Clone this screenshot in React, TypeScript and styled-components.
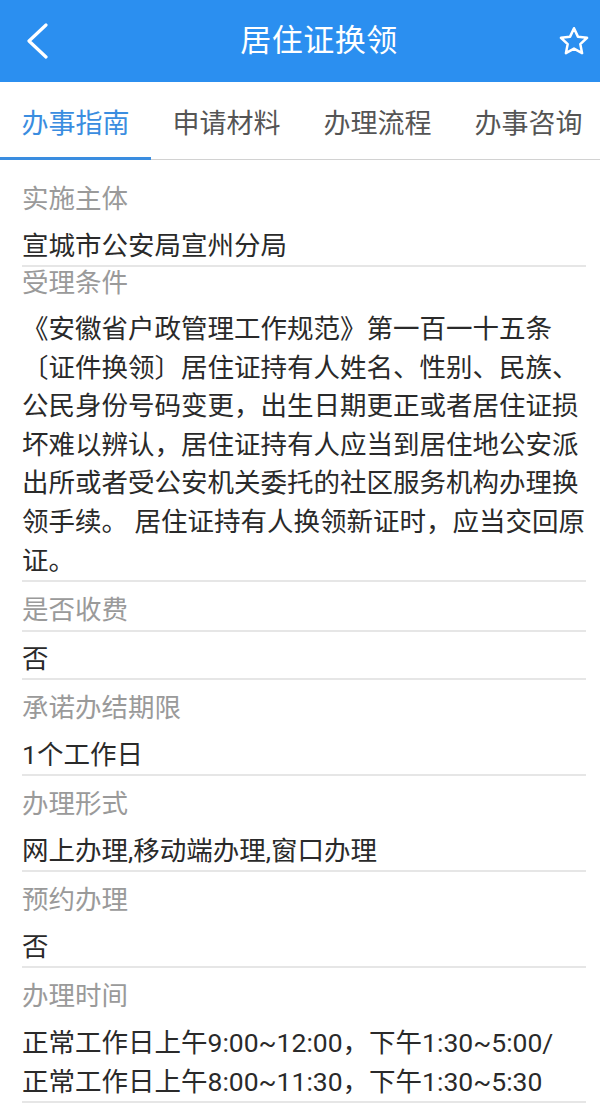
import React from "react";
import styled, { createGlobalStyle } from "styled-components";

const GlobalStyle = createGlobalStyle`
  html, body {
    margin: 0;
    padding: 0;
    background: #ffffff;
  }
  body {
    font-family: Roboto, "Noto Sans CJK SC", "Noto Sans", sans-serif;
  }
  * { box-sizing: border-box; }
`;

const Page = styled.div`
  width: 600px;
  min-height: 1107px;
  background: #ffffff;
  overflow: hidden;
`;

const Header = styled.header`
  height: 82px;
  background: #2b8ff0;
  display: flex;
  align-items: center;
`;

const BackButton = styled.div`
  width: 90px;
  height: 82px;
  padding-left: 26px;
  display: flex;
  align-items: center;
`;

const Title = styled.h1`
  flex: 1;
  margin: 0;
  text-align: center;
  color: #ffffff;
  font-size: 31px;
  font-weight: 400;
  line-height: 82px;
  letter-spacing: 0.5px;
`;

const StarButton = styled.div`
  width: 52px;
  height: 82px;
  display: flex;
  align-items: center;
  justify-content: center;
`;

const TabBar = styled.nav`
  height: 78px;
  display: flex;
  border-bottom: 1px solid #d2d2d2;
`;

const Tab = styled.div<{ $active?: boolean }>`
  flex: 0 0 151px;
  display: flex;
  align-items: center;
  justify-content: center;
  font-size: 27px;
  color: ${(p) => (p.$active ? "#3a8de0" : "#555555")};
  box-shadow: ${(p) => (p.$active ? "inset 0 -3px 0 #3a8de0" : "none")};
  margin-bottom: -1px;
`;

const Content = styled.main`
  padding: 0 14px 0 22px;
`;

const Label = styled.div<{ $top?: number; $lh?: number; $divider?: boolean }>`
  padding-top: ${(p) => p.$top ?? 8}px;
  font-size: 26.5px;
  line-height: ${(p) => p.$lh ?? 40}px;
  color: #9a9a9a;
  border-bottom: ${(p) => (p.$divider ? "2px solid #e6e6e6" : "none")};
`;

const Value = styled.div<{ $gap?: number; $lh?: number }>`
  margin-top: ${(p) => p.$gap ?? 7}px;
  font-size: 26.5px;
  line-height: ${(p) => p.$lh ?? 39}px;
  color: #2a2a2a;
  border-bottom: 2px solid #e6e6e6;
  line-break: strict;
`;

const ChevronIcon = () => (
  <svg width="24" height="36" viewBox="0 0 24 36" fill="none">
    <polyline
      points="20,2 3,18 20,34"
      stroke="#ffffff"
      strokeWidth="3.2"
      strokeLinecap="round"
      strokeLinejoin="round"
    />
  </svg>
);

const StarIcon = () => (
  <svg width="30" height="30" viewBox="0 0 24 24" fill="none">
    <polygon
      points="12,1.8 15.12,8.51 22.46,9.4 17.04,14.44 18.47,21.7 12,18.1 5.53,21.7 6.96,14.44 1.54,9.4 8.88,8.51"
      stroke="#ffffff"
      strokeWidth="2"
      strokeLinejoin="round"
    />
  </svg>
);

const tabs = ["办事指南", "申请材料", "办理流程", "办事咨询"];

export default function App() {
  return (
    <Page>
      <GlobalStyle />
      <Header>
        <BackButton>
          <ChevronIcon />
        </BackButton>
        <Title>居住证换领</Title>
        <StarButton>
          <StarIcon />
        </StarButton>
      </Header>
      <TabBar>
        {tabs.map((t, i) => (
          <Tab key={t} $active={i === 0}>
            {t}
          </Tab>
        ))}
      </TabBar>
      <Content>
        <Label $top={19}>实施主体</Label>
        <Value $gap={7}>宣城市公安局宣州分局</Value>

        <Label $top={0} $lh={32}>受理条件</Label>
        <Value $gap={11} $lh={38.6}>
          《安徽省户政管理工作规范》第一百一十五条〔证件换领〕居住证持有人姓名、性别、民族、公民身份号码变更，出生日期更正或者居住证损坏难以辨认，居住证持有人应当到居住地公安派出所或者受公安机关委托的社区服务机构办理换领手续。 居住证持有人换领新证时，应当交回原证。
        </Value>

        <Label $divider>是否收费</Label>
        <Value>否</Value>

        <Label>承诺办结期限</Label>
        <Value>1个工作日</Value>

        <Label>办理形式</Label>
        <Value>网上办理,移动端办理,窗口办理</Value>

        <Label>预约办理</Label>
        <Value>否</Value>

        <Label>办理时间</Label>
        <Value>
          正常工作日上午9:00~12:00，下午1:30~5:00/
          <br />
          正常工作日上午8:00~11:30，下午1:30~5:30
        </Value>
      </Content>
    </Page>
  );
}
